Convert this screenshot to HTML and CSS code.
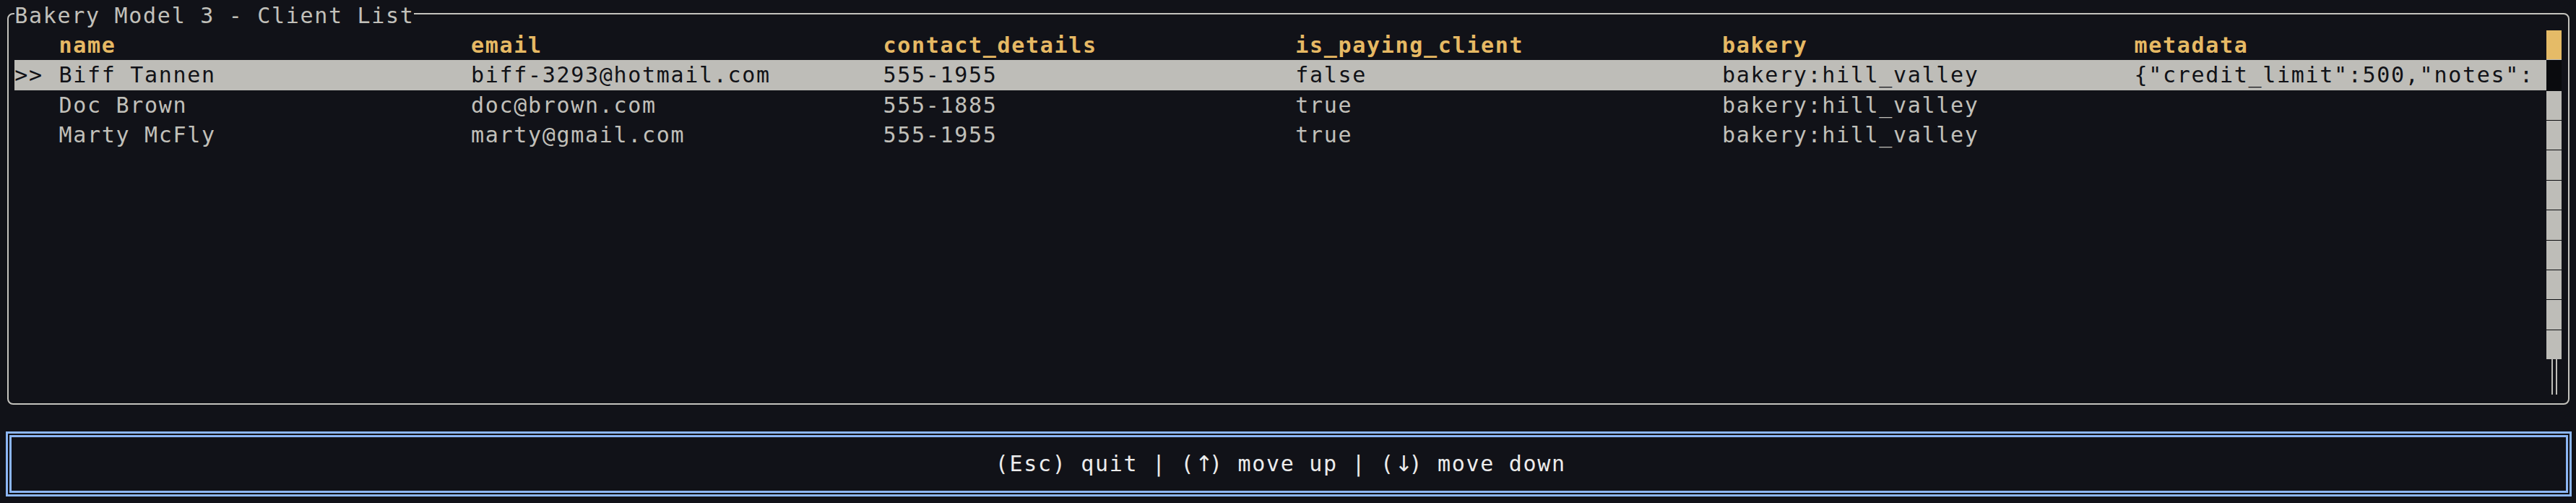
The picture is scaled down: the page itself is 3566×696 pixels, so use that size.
FILE: index.html
```html
<!DOCTYPE html>
<html lang="en">
<head>
<meta charset="utf-8">
<title>Bakery Model 3 - Client List</title>
<link rel="stylesheet" href="styles.css">
</head>
<body>
<div class="screen">
  <section class="top">
    <div class="frame">
      <div class="title-row"><span class="title">Bakery Model 3 - Client List</span></div>
      <div class="body">
        <div class="table">
          <div class="row header">
            <div class="cell"></div>
            <div class="cell">name</div>
            <div class="cell">email</div>
            <div class="cell">contact_details</div>
            <div class="cell">is_paying_client</div>
            <div class="cell">bakery</div>
            <div class="cell">metadata</div>
          </div>
          <div class="row selected">
            <div class="cell">&gt;&gt; </div>
            <div class="cell">Biff Tannen</div>
            <div class="cell">biff-3293@hotmail.com</div>
            <div class="cell">555-1955</div>
            <div class="cell">false</div>
            <div class="cell">bakery:hill_valley</div>
            <div class="cell">{"credit_limit":500,"notes":</div>
          </div>
          <div class="row">
            <div class="cell"></div>
            <div class="cell">Doc Brown</div>
            <div class="cell">doc@brown.com</div>
            <div class="cell">555-1885</div>
            <div class="cell">true</div>
            <div class="cell">bakery:hill_valley</div>
            <div class="cell"></div>
          </div>
          <div class="row">
            <div class="cell"></div>
            <div class="cell">Marty McFly</div>
            <div class="cell">marty@gmail.com</div>
            <div class="cell">555-1955</div>
            <div class="cell">true</div>
            <div class="cell">bakery:hill_valley</div>
            <div class="cell"></div>
          </div>
        </div>
        <div class="scrollbar">
          <div class="sb-cell sb-thumb"></div>
          <div class="sb-cell sb-dark"></div>
          <div class="sb-cell sb-block"></div>
          <div class="sb-cell sb-block"></div>
          <div class="sb-cell sb-block"></div>
          <div class="sb-cell sb-block"></div>
          <div class="sb-cell sb-block"></div>
          <div class="sb-cell sb-block"></div>
          <div class="sb-cell sb-block"></div>
          <div class="sb-cell sb-block"></div>
          <div class="sb-cell sb-block"></div>
          <div class="sb-cell sb-track"><div class="dbl"></div></div>
        </div>
      </div>
    </div>
  </section>
  <section class="bottom">
    <div class="help">
      <div class="help-text">(Esc) quit | (<span class="arrow">↑</span>) move up | (<span class="arrow">↓</span>) move down</div>
    </div>
  </section>
</div>
</body>
</html>
```

FILE: styles.css
```css
:root {
  --cw: 20.377px;
  --rh: 41.4px;
  --bg: #111218;
  --fg: #c1c0ba;
  --hl: #bebdb8;
  --yellow: #e6b964;
  --blue: #8cb6f4;
}

html, body {
  margin: 0;
  padding: 0;
  background: var(--bg);
}

body {
  width: 3566px;
  height: 696px;
  overflow: hidden;
}

.screen {
  padding-top: 0.5px;
  font-family: "DejaVu Sans Mono", monospace;
  font-size: 30px;
  line-height: var(--rh);
  letter-spacing: 1.69px;
  color: var(--fg);
}

.top {
  height: calc(var(--rh) * 14);
  box-sizing: border-box;
  padding: 17px 0 0 10.2px;
}

.frame {
  box-sizing: border-box;
  width: 3546.8px;
  height: 542.5px;
  border: 2px solid #c4c3bd;
  border-radius: 8px;
  padding-left: 8.18px;
}

.title-row {
  height: var(--rh);
  margin-top: -19px;
  white-space: pre;
}

.title {
  background: var(--bg);
}

.body {
  display: flex;
}

.table {
  width: calc(var(--cw) * 172);
}

.row {
  display: grid;
  grid-template-columns:
    calc(var(--cw) * 3)
    calc(var(--cw) * 28)
    calc(var(--cw) * 28)
    calc(var(--cw) * 28)
    calc(var(--cw) * 29)
    calc(var(--cw) * 28)
    calc(var(--cw) * 28);
  height: var(--rh);
}

.cell {
  overflow: hidden;
  white-space: pre;
}

.header {
  color: var(--yellow);
  font-weight: bold;
}

.selected {
  background: var(--hl);
  color: #111217;
}

.scrollbar {
  width: var(--cw);
  display: flex;
  flex-direction: column;
}

.sb-cell {
  height: var(--rh);
  box-sizing: border-box;
  flex: none;
}

.sb-thumb {
  background: #e5bb67;
  border-bottom: 1.6px solid var(--hl);
}

.sb-dark {
  background: #0a0b0e;
}

.sb-block {
  background: var(--hl);
  border-top: 1.5px solid #0c0d10;
}

.sb-track {
  display: flex;
  justify-content: center;
}

.dbl {
  width: 8px;
  height: 49px;
  box-sizing: border-box;
  border-left: 2.5px solid var(--hl);
  border-right: 2.5px solid var(--hl);
  margin-left: 1px;
}

.bottom {
  padding: 16.6px 0 0 7.5px;
}

.help {
  box-sizing: border-box;
  width: 3552.5px;
  height: 90.6px;
  border: 8px double var(--blue);
  padding-top: 16.8px;
}

.help-text {
  margin-left: 4.877px;
  width: calc(var(--cw) * 172);
  text-align: center;
  color: #ececec;
  white-space: pre;
}

.arrow {
  display: inline-block;
  width: 19.75px;
  text-align: center;
  font-family: "DejaVu Sans", sans-serif;
  letter-spacing: 0;
  line-height: 1;
}
```
